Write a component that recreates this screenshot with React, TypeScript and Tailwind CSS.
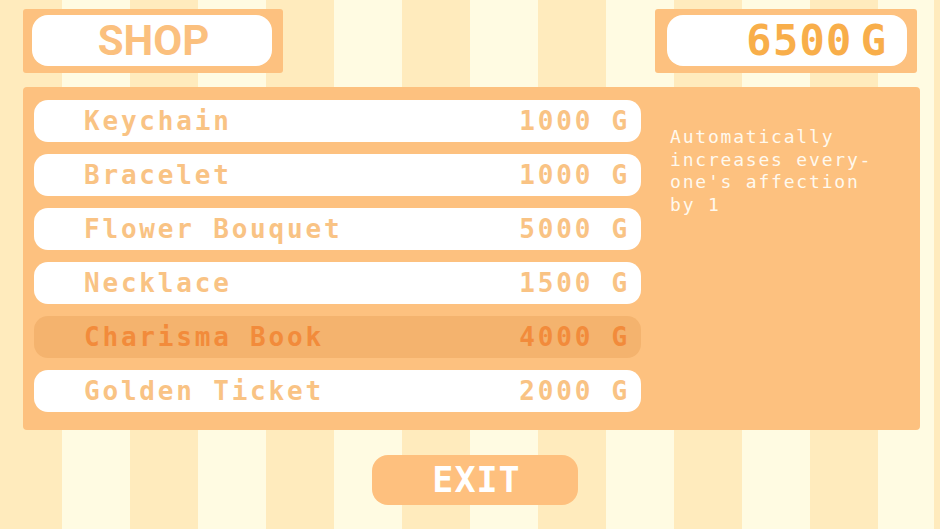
import React from "react";

const items = [
  { name: "Keychain", price: "1000 G" },
  { name: "Bracelet", price: "1000 G" },
  { name: "Flower Bouquet", price: "5000 G" },
  { name: "Necklace", price: "1500 G" },
  { name: "Charisma Book", price: "4000 G", selected: true },
  { name: "Golden Ticket", price: "2000 G" },
];

const mono = "font-['DejaVu_Sans_Mono',monospace]";

export default function App() {
  return (
    <div className="w-[940px] h-[529px] overflow-hidden flex flex-col pl-[23px] pt-[9px] bg-[repeating-linear-gradient(90deg,#FFEBBD_0px,#FFEBBD_68px,#FFFBE2_68px,#FFFBE2_136px)] bg-position-[-6px_0px]">
      <div className="flex justify-between w-[894px]">
        <div className="w-[260px] h-[64px] bg-[#FDC17F] rounded-[3px] pt-[6px] pl-[9px]">
          <div className="w-[240px] h-[51px] bg-white rounded-[16px] flex items-center justify-center pl-[3px] text-[42px] font-bold text-[#FBC07E] font-['Roboto',sans-serif] leading-none">
            SHOP
          </div>
        </div>
        <div className="w-[262px] h-[64px] bg-[#FDC17F] rounded-[3px] pt-[6px] pl-[12px]">
          <div className={`w-[240px] h-[51px] bg-white rounded-[16px] flex items-center justify-end pr-[21px] text-[42px] font-bold text-[#F8AE4A] leading-none ${mono}`}>
            <span className="tracking-[1.3px]">6500</span>
            <span className="ml-[8px]">G</span>
          </div>
        </div>
      </div>

      <div className="mt-[14px] w-[897px] h-[343px] bg-[#FDC17F] rounded-[4px] flex pt-[13px] pl-[11px]">
        <div className="w-[607px] flex flex-col gap-[12px]">
          {items.map((it) => (
            <div
              key={it.name}
              className={`h-[42px] rounded-[14px] flex items-center justify-between pl-[50px] pr-[11px] text-[26px] font-bold tracking-[2.8px] leading-none ${mono} ${
                it.selected ? "bg-[#F4B36E] text-[#F28B3B]" : "bg-white text-[#F9C384]"
              }`}
            >
              <span>{it.name}</span>
              <span>{it.price}</span>
            </div>
          ))}
        </div>
        <div className={`ml-[29px] mt-[26px] text-[18px] leading-[22.5px] tracking-[1.8px] text-[#FFF9EE] ${mono}`}>
          Automatically
          <br />
          increases every-
          <br />
          one's affection
          <br />
          by 1
        </div>
      </div>

      <div className="mt-[25px] ml-[349px] w-[206px] h-[50px] rounded-[16px] bg-[#FEC07E] flex items-center justify-center text-white">
        <span className={`text-[35px] font-bold leading-none tracking-[1px] pl-[3px] ${mono}`}>EXIT</span>
      </div>
    </div>
  );
}
